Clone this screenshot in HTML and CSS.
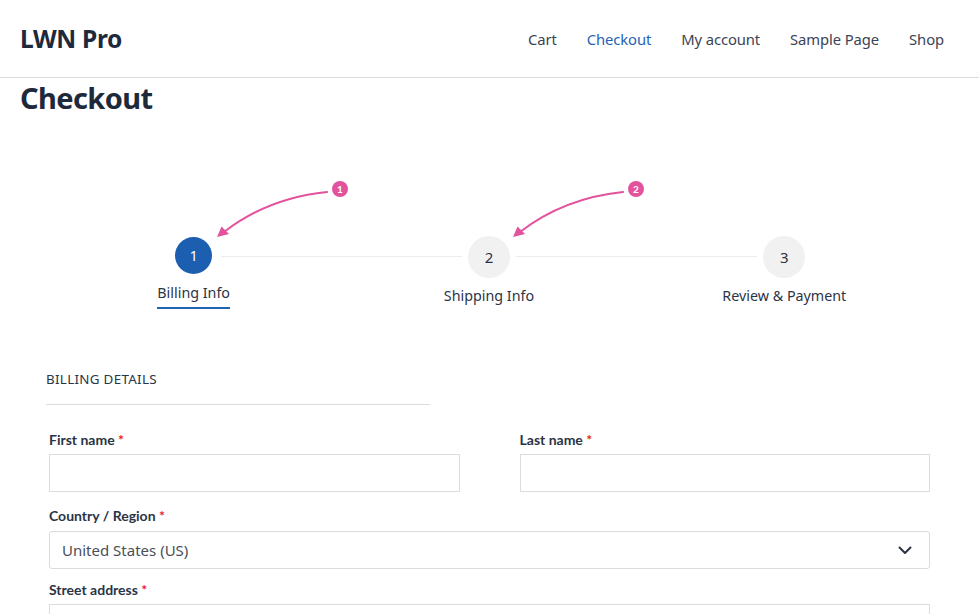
FILE: index.html
```html
<!DOCTYPE html>
<html lang="en">
<head>
<meta charset="utf-8">
<title>Checkout – LWN Pro</title>
<link rel="stylesheet" href="styles.css">
</head>
<body>
<header class="site-header">
  <div class="logo">LWN Pro</div>
  <nav class="nav">
    <a class="nav-item" href="#">Cart</a>
    <a class="nav-item active" href="#">Checkout</a>
    <a class="nav-item" href="#">My account</a>
    <a class="nav-item" href="#">Sample Page</a>
    <a class="nav-item" href="#">Shop</a>
  </nav>
</header>
<main class="main">
  <h1 class="title">Checkout</h1>
  <section class="stepper">
    <div class="step current">
      <div class="circle">1</div>
      <div class="step-label">Billing Info</div>
    </div>
    <div class="step">
      <div class="circle">2</div>
      <div class="step-label">Shipping Info</div>
    </div>
    <div class="step last">
      <div class="circle">3</div>
      <div class="step-label">Review &amp; Payment</div>
    </div>
  </section>
  <section class="billing">
    <h3 class="section-title">BILLING DETAILS</h3>
    <div class="row two">
      <div class="field">
        <label class="label">First name <span class="req">*</span></label>
        <input class="input" type="text">
      </div>
      <div class="field">
        <label class="label">Last name <span class="req">*</span></label>
        <input class="input" type="text">
      </div>
    </div>
    <div class="field country">
      <label class="label">Country / Region <span class="req">*</span></label>
      <div class="select">
        <span>United States (US)</span>
        <svg class="chev" width="14" height="9" viewBox="0 0 14 9"><path d="M1.5 1.5 L7 7 L12.5 1.5" fill="none" stroke="#2b3445" stroke-width="2" stroke-linecap="round" stroke-linejoin="round"/></svg>
      </div>
    </div>
    <div class="field street">
      <label class="label">Street address <span class="req">*</span></label>
      <input class="input" type="text">
    </div>
  </section>
</main>
<svg class="annotations" width="979" height="320" viewBox="0 0 979 320">
  <g fill="none" stroke="#e2529d" stroke-width="2" stroke-linecap="round">
    <path d="M327 192 Q 268 198 224 232"/>
    <path d="M623 192 Q 564 198 520 232"/>
  </g>
  <g fill="#e2529d">
    <path d="M217 237 L221.5 226.5 L229 234 Z"/>
    <path d="M513 237 L517.5 226.5 L525 234 Z"/>
    <circle cx="340" cy="189" r="8"/>
    <circle cx="636" cy="189" r="8"/>
  </g>
  <g fill="#fff" font-family="Lato, sans-serif" font-weight="700" font-size="10" text-anchor="middle">
    <text x="340" y="192.5">1</text>
    <text x="636" y="192.5">2</text>
  </g>
</svg>
</body>
</html>
```
FILE: styles.css
```css
* { box-sizing: border-box; }
body {
  margin: 0;
  font-family: "Noto Sans", "Open Sans", sans-serif;
  color: #2b3445;
  background: #fff;
  position: relative;
}
.site-header {
  height: 78px;
  border-bottom: 1px solid #dcdcdf;
  display: flex;
  align-items: center;
  justify-content: space-between;
  padding: 0 20px;
}
.logo {
  font-family: "Noto Sans", sans-serif;
  font-weight: 700;
  font-size: 24.5px;
  color: #1e293b;
  letter-spacing: -0.3px;
}
.nav { display: flex; }
.nav-item {
  padding: 0 15px;
  font-size: 14.8px;
  color: #3a4455;
  text-decoration: none;
  letter-spacing: -0.1px;
}
.nav-item.active { color: #1f64b4; }
.main { padding: 0 20px; }
.title {
  margin: 0;
  font-size: 29px;
  line-height: 40px;
  font-weight: 700;
  color: #1e293b;
  letter-spacing: -0.6px;
}
.stepper {
  display: grid;
  grid-template-columns: repeat(3, 1fr);
  margin: 118px 27px 0 26px;
  height: 133px;
}
.step {
  position: relative;
  display: flex;
  flex-direction: column;
  align-items: center;
}
.step::after {
  content: "";
  position: absolute;
  top: 20px;
  left: calc(50% + 27px);
  width: calc(100% - 54px);
  height: 1px;
  background: #ececec;
}
.step.last::after { display: none; }
.circle {
  width: 42px;
  height: 42px;
  border-radius: 50%;
  background: #f1f1f1;
  display: flex;
  align-items: center;
  justify-content: center;
  font-size: 15px;
  color: #2b3445;
}
.step.current .circle {
  width: 37px;
  height: 37px;
  margin-top: 1px;
  background: #1c5fb1;
  color: #fff;
  font-size: 14px;
}
.step-label {
  margin-top: 8px;
  font-size: 14.3px;
  color: #2b3445;
  padding-bottom: 5px;
}
.step.current .step-label {
  margin-top: 9px;
  border-bottom: 2px solid #1f64b4;
}
.billing { padding: 0 29px; }
.section-title {
  margin: 0 0 0 -3px;
  width: 384px;
  font-size: 13.4px;
  font-weight: 400;
  letter-spacing: 0.3px;
  color: #2b3445;
  padding-bottom: 15px;
  border-bottom: 1px solid #dcdcdf;
  line-height: 20px;
}
.row.two {
  display: grid;
  grid-template-columns: 1fr 1fr;
  gap: 60px;
}
.field {
  display: flex;
  flex-direction: column;
}
.row.two .field { margin-top: 26px; }
.field.country { margin-top: 15px; }
.field.street { margin-top: 12px; }
.field.country .label { margin-bottom: 6px; }
.label {
  font-family: Lato, sans-serif;
  font-weight: 700;
  font-size: 14px;
  color: #2b3445;
  line-height: 18px;
  margin-bottom: 5px;
}
.req { color: #e41e1e; }
.input {
  height: 38px;
  border: 1px solid #dcdcdf;
  background: #fff;
  font: inherit;
}
.select {
  height: 38px;
  border: 1px solid #dcdcdf;
  border-radius: 3px;
  display: flex;
  align-items: center;
  justify-content: space-between;
  padding: 0 17px 0 12px;
  font-size: 15px;
  color: #4a4f58;
}
.annotations {
  position: absolute;
  top: 0;
  left: 0;
  pointer-events: none;
}
```
